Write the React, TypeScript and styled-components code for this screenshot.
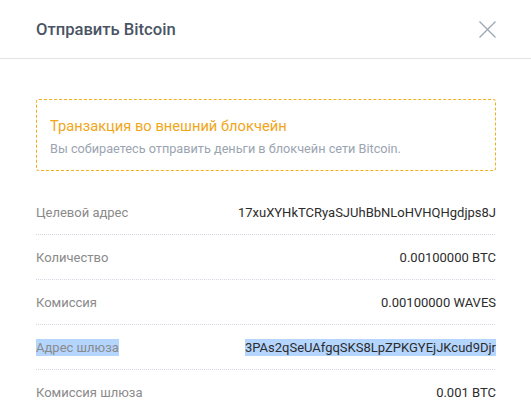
import React from "react";
import styled, { createGlobalStyle } from "styled-components";

const Global = createGlobalStyle`
  html, body { margin: 0; padding: 0; background: #ffffff; }
  body { font-family: Roboto, "Noto Sans", Arial, sans-serif; -webkit-font-smoothing: antialiased; }
`;

const Modal = styled.div`
  width: 531px;
  height: 416px;
  overflow: hidden;
  background: #fff;
`;

const Header = styled.div`
  height: 59px;
  border-bottom: 1px solid #e3e3e3;
  display: flex;
  align-items: center;
  justify-content: space-between;
  padding: 0 35px 0 36px;
  box-sizing: border-box;
`;

const Title = styled.h1`
  margin: 0;
  font-size: 16.6px;
  font-weight: 500;
  color: #4a5464;
`;

const Close = styled.button`
  border: none;
  background: none;
  padding: 0;
  width: 17px;
  height: 17px;
  display: flex;
  cursor: pointer;
`;

const Body = styled.div`
  padding: 40px 35px 0 36px;
  display: flex;
  flex-direction: column;
  gap: 19px;
`;

const Warning = styled.div`
  border: 1px dashed #f4ad1c;
  border-radius: 3px;
  padding: 17px 13px 14px 13px;
  display: flex;
  flex-direction: column;
  gap: 6px;
`;

const WarnTitle = styled.div`
  font-size: 14.7px;
  color: #f0a61a;
  line-height: 18px;
`;

const WarnText = styled.div`
  font-size: 12.7px;
  color: #9ba4b1;
  line-height: 15px;
`;

const List = styled.div`
  display: flex;
  flex-direction: column;
`;

const Row = styled.div<{ $last?: boolean }>`
  height: 45px;
  display: flex;
  align-items: center;
  justify-content: space-between;
  background-image: ${(p) =>
    p.$last ? "none" : "linear-gradient(to right, #d3d9e2 50%, transparent 50%)"};
  background-size: 2px 1px;
  background-repeat: repeat-x;
  background-position: left bottom;
  font-size: 13px;
`;

const Label = styled.span<{ $sel?: boolean }>`
  color: #8a8a8a;
  background: ${(p) => (p.$sel ? "#b4d5fe" : "transparent")};
  padding: 1px 0;
`;

const Value = styled.span<{ $sel?: boolean }>`
  color: #2c2c2c;
  background: ${(p) => (p.$sel ? "#b4d5fe" : "transparent")};
  padding: 1px 0;
`;

const rows = [
  { label: "Целевой адрес", value: "17xuXYHkTCRyaSJUhBbNLoHVHQHgdjps8J" },
  { label: "Количество", value: "0.00100000 BTC" },
  { label: "Комиссия", value: "0.00100000 WAVES" },
  { label: "Адрес шлюза", value: "3PAs2qSeUAfgqSKS8LpZPKGYEjJKcud9Djr", sel: true },
  { label: "Комиссия шлюза", value: "0.001 BTC" },
];

export default function App() {
  return (
    <Modal>
      <Global />
      <Header>
        <Title>Отправить Bitcoin</Title>
        <Close aria-label="close">
          <svg width="17" height="17" viewBox="0 0 17 17">
            <path d="M0.5 0.5 L16.5 16.5 M16.5 0.5 L0.5 16.5" stroke="#9aa5b4" strokeWidth="1.2" fill="none" />
          </svg>
        </Close>
      </Header>
      <Body>
        <Warning>
          <WarnTitle>Транзакция во внешний блокчейн</WarnTitle>
          <WarnText>Вы собираетесь отправить деньги в блокчейн сети Bitcoin.</WarnText>
        </Warning>
        <List>
          {rows.map((r, i) => (
            <Row key={r.label} $last={i === rows.length - 1}>
              <Label $sel={r.sel}>{r.label}</Label>
              <Value $sel={r.sel}>{r.value}</Value>
            </Row>
          ))}
        </List>
      </Body>
    </Modal>
  );
}
